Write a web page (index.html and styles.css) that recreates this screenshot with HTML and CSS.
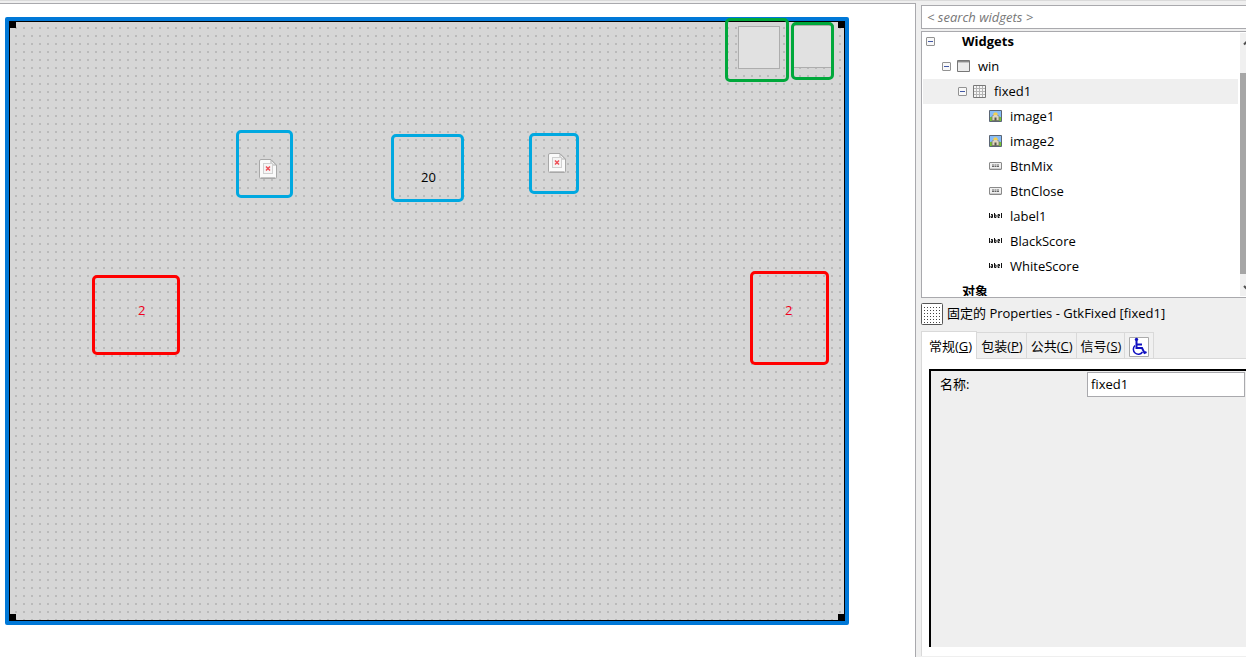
FILE: index.html
```html
<!DOCTYPE html>
<html lang="zh-CN">
<head>
<meta charset="utf-8">
<title>Glade</title>
<link rel="stylesheet" href="styles.css">
</head>
<body>
<svg class="defs" width="0" height="0" aria-hidden="true">
  <symbol id="missing" viewBox="0 0 18 20">
    <path d="M2 .5h10l5.500 5.500v12.500a1 1 0 0 1-1 1h-15a1 1 0 0 1-1-1v-16.500a1.500 1.500 0 0 1 1.500-1.500z" fill="#fafafa" stroke="#a8a8a8"/>
    <path d="M1.500 18.500h15" stroke="#c4c4c4"/>
    <path d="M12 1v5h5z" fill="#f0f0f0" stroke="#b0b0b0"/>
    <rect x="4.500" y="4.500" width="9" height="10" fill="#f5f5f5" stroke="#d0d0d0"/>
    <path d="M7 7.500l4 4m0-4l-4 4" stroke="#ee4d55" stroke-width="1.500"/>
  </symbol>
  <symbol id="image" viewBox="0 0 13 12">
    <path d="M.5.500h12v11h-12z" fill="#86bcf8" stroke="#5c6674"/>
    <path d="M1 7h11v4h-11z" fill="#76c433"/>
    <path d="M3 6.500l3.500-3.500 3.500 3.500v4h-7z" fill="#ddd5bd" stroke="#77736a" stroke-width=".8"/>
    <path d="M4 5l1-2.500h3l1 2.500z" fill="#f3cf52"/>
    <path d="M5.500 7.500h2v3h-2z" fill="#55534e"/>
  </symbol>
  <symbol id="button" viewBox="0 0 13 8">
    <rect x=".5" y=".5" width="12" height="7" rx=".5" fill="#f0f0f0" stroke="#8a8a8a"/>
    <path d="M1 6.500h11" stroke="#ccc"/>
    <path d="M3 3h7M3 4.500h7" stroke="#666" stroke-dasharray="2 .5"/>
  </symbol>
  <symbol id="label" viewBox="0 0 13 5">
    <path d="M.5 0v5M2 1.500h1.500v3h-1.500v-1.500h1.500M5.500 0v4.500h1.500v-2.500h-1.500M10.500 4.500h-1.500v-3h1.500v1.500h-1.500M12.500 0v5" fill="none" stroke="#111"/>
  </symbol>
</svg>

<div class="app">
  <main class="workspace">
    <div class="window">
      <div class="surface">
        <i class="handle handle-tl"></i><i class="handle handle-tr"></i>
        <i class="handle handle-bl"></i><i class="handle handle-br"></i>
        <button class="placed mix" aria-label="BtnMix"></button>
        <button class="placed close" aria-label="BtnClose"></button>
        <svg class="missing missing-1"><use href="#missing"/></svg>
        <svg class="missing missing-2"><use href="#missing"/></svg>
        <span class="text text-round">20</span>
        <span class="text text-black">2</span>
        <span class="text text-white">2</span>
        <div class="mark green mark-mix"></div>
        <div class="mark green mark-close"></div>
        <div class="mark cyan mark-image1"></div>
        <div class="mark cyan mark-round"></div>
        <div class="mark cyan mark-image2"></div>
        <div class="mark red mark-black"></div>
        <div class="mark red mark-white"></div>
      </div>
    </div>
  </main>

  <aside class="inspector">
    <input class="search" type="text" placeholder="&lt; search widgets &gt;" aria-label="search widgets">

    <div class="tree-box">
      <ul class="tree">
        <li class="row level-0"><button class="expander" aria-label="collapse Widgets"></button><b>Widgets</b></li>
        <li class="row level-1"><button class="expander" aria-label="collapse win"></button>
          <svg class="icon icon-window" viewBox="0 0 13 12"><path d="M.5.500h12v11h-12z" fill="#ececec" stroke="#777"/><path d="M1 1.500h11" stroke="#8c8c8c"/><path d="M1 2.500h11" stroke="#c4c4c4"/></svg><span>win</span></li>
        <li class="row level-2 selected"><button class="expander" aria-label="collapse fixed1"></button>
          <svg class="icon icon-fixed" viewBox="0 0 13 13"><path d="M.5.500h12v12h-12z" fill="#f6f6f6" stroke="#777"/><path d="M3.500 1v11M6.500 1v11M9.500 1v11M1 3.500h11M1 6.500h11M1 9.500h11" stroke="#b4b4b4"/></svg><span>fixed1</span></li>
        <li class="row level-3"><svg class="icon icon-image"><use href="#image"/></svg><span>image1</span></li>
        <li class="row level-3"><svg class="icon icon-image"><use href="#image"/></svg><span>image2</span></li>
        <li class="row level-3"><svg class="icon icon-button"><use href="#button"/></svg><span>BtnMix</span></li>
        <li class="row level-3"><svg class="icon icon-button"><use href="#button"/></svg><span>BtnClose</span></li>
        <li class="row level-3"><svg class="icon icon-label"><use href="#label"/></svg><span>label1</span></li>
        <li class="row level-3"><svg class="icon icon-label"><use href="#label"/></svg><span>BlackScore</span></li>
        <li class="row level-3"><svg class="icon icon-label"><use href="#label"/></svg><span>WhiteScore</span></li>
        <li class="row level-0 last"><b>对象</b></li>
      </ul>
      <div class="scrollbar">
        <svg class="arrow" viewBox="0 0 6 40"><path d="M4 11.500l4-4" stroke="#505050" stroke-width="2"/></svg>
        <div class="thumb"></div>
        <svg class="arrow-down" viewBox="0 0 6 22"><path d="M4 12l4 4" stroke="#505050" stroke-width="2"/></svg>
      </div>
    </div>

    <h1 class="heading">
      <svg class="fixed-icon" viewBox="0 0 22 22"><rect x=".5" y=".5" width="21" height="21" rx="1" fill="#fff" stroke="#555"/><path d="M3 4.500h17M3 7.500h17M3 10.500h17M3 13.500h17M3 16.500h17M3 19.500h17" stroke="#444" stroke-dasharray="1 2"/></svg>
      <span>固定的 Properties - GtkFixed [fixed1]</span>
    </h1>

    <div class="tabs" role="tablist">
      <button class="tab active" role="tab" aria-selected="true">常规(<u>G</u>)</button>
      <button class="tab" role="tab">包装(<u>P</u>)</button>
      <button class="tab" role="tab">公共(<u>C</u>)</button>
      <button class="tab" role="tab">信号(<u>S</u>)</button>
      <button class="tab tab-icon" role="tab" aria-label="Accessibility">
        <svg class="access" viewBox="0 0 20 20"><path d="M.5.500h19v19h-19z" fill="#fff" stroke="#aaa"/><circle cx="7.500" cy="2.500" r="1.700" fill="#1010c0"/><path d="M7.500 4v7h5.500l2.500 5 2-1M8 7.500h5" fill="none" stroke="#1010c0" stroke-width="2"/><path d="M6 8.500a5 5 0 1 0 7.500 6.500" fill="none" stroke="#1010c0" stroke-width="1.500"/></svg>
      </button>
    </div>

    <div class="page">
      <div class="form">
        <label class="name" for="widget-name">名称:</label>
        <input class="value" id="widget-name" type="text" value="fixed1">
      </div>
    </div>
  </aside>
</div>
</body>
</html>
```

FILE: styles.css
```css
* { box-sizing: border-box; }

body {
  margin: 0;
  background: #efefef;
  color: #000;
  font: 13px/20px "Open Sans", "Noto Sans CJK SC", sans-serif;
  overflow: hidden;
}

button, input { font: inherit; color: inherit; margin: 0; }

.defs { position: absolute; }

.app {
  display: grid;
  grid-template-columns: minmax(0, 1fr) 330px;
  height: 100vh;
  border-top: 1px solid #dadada;
  padding-top: 2px;
}

/* Design area */
.workspace {
  background: #fff;
  border-top: 1px solid #a9a9ad;
  border-right: 1px solid #a9a9ad;
  padding: 13px 5px;
  overflow: hidden;
}

.window {
  width: 844px;
  height: 608px;
  border: 4px solid #0078d7;
  border-radius: 2px;
}

.surface {
  position: relative;
  height: 100%;
  border: 1px solid #000;
  background: #d6d6d6 url("data:image/svg+xml,%3Csvg xmlns='http://www.w3.org/2000/svg' width='8' height='8'%3E%3Crect x='5' y='5' width='2' height='2' fill='%23bababa'/%3E%3C/svg%3E");
}

.handle { position: absolute; width: 7px; height: 7px; background: #000; }
.handle-tl { left: -1px; top: -1px; }
.handle-tr { right: -1px; top: -1px; }
.handle-bl { left: -1px; bottom: -1px; }
.handle-br { right: -1px; bottom: -1px; }

.placed { position: absolute; width: 42px; height: 43px; padding: 0; background: #e1e1e1; border: 1px solid #adadad; }
.mix { left: 728px; top: 4px; }
.close { left: 782px; top: 3px; }

.missing { position: absolute; width: 18px; height: 20px; }
.missing-1 { left: 249px; top: 137px; }
.missing-2 { left: 538px; top: 131px; }

.text { position: absolute; line-height: 20px; }
.text-round { left: 411px; top: 145px; }
.text-black { left: 128px; top: 278px; color: #f00020; }
.text-white { left: 775px; top: 278px; color: #f00020; }

.mark { position: absolute; border: 3px solid; border-radius: 5px; }
.green { border-color: #00a83b; }
.cyan { border-color: #00a8e0; }
.red { border-color: #f00; }
.mark-mix { left: 715px; top: -4px; width: 64px; height: 64px; }
.mark-close { left: 781px; top: 0; width: 43px; height: 58px; }
.mark-image1 { left: 226px; top: 108px; width: 57px; height: 68px; }
.mark-round { left: 381px; top: 112px; width: 73px; height: 68px; }
.mark-image2 { left: 519px; top: 111px; width: 50px; height: 61px; }
.mark-black { left: 82px; top: 253px; width: 88px; height: 80px; }
.mark-white { left: 740px; top: 249px; width: 79px; height: 94px; }

/* Inspector */
.inspector {
  display: flex;
  flex-direction: column;
  padding: 2px 0 0 5px;
  min-width: 0;
}

.search {
  height: 24px;
  width: 100%;
  padding: 0 5px;
  background: #fff;
  border: 1px solid #a9a9ad;
  border-right: 0;
  outline: 0;
}
.search::placeholder { color: #777; font-style: italic; opacity: 1; }

.tree-box {
  display: flex;
  justify-content: space-between;
  height: 267px;
  margin-top: 2px;
  padding: 1px 0 1px 1px;
  background: #fff;
  border: 1px solid #a9a9ad;
  border-right: 0;
}

.tree {
  flex: 1;
  display: flex;
  flex-direction: column;
  justify-content: flex-end;
  height: 263px;
  margin: 0 2px 0 0;
  padding: 0;
  list-style: none;
  overflow: hidden;
}

.row { display: flex; flex: none; align-items: center; height: 25px; }
.row span, .row b { padding-bottom: 2px; }
.row.last { height: 17px; align-items: flex-start; line-height: 25px; overflow: hidden; }
.selected { background: #efefef; }
.level-0 { padding-left: 3px; }
.level-0 b { margin-left: 27px; }
.level-0.last b { margin-left: 36px; }
.level-1 { padding-left: 19px; }
.level-2 { padding-left: 35px; }
.level-3 { padding-left: 66px; }

.expander {
  width: 9px;
  height: 9px;
  padding: 0;
  border: 1px solid #929292;
  border-radius: 1px;
  background: linear-gradient(#4459a5, #4459a5) center / 5px 1px no-repeat #f8f8f8;
}
.expander + .icon { margin-left: 6px; }

.icon { width: 13px; height: 13px; margin-right: 8px; }
.icon-window, .icon-image { height: 12px; margin-bottom: 1px; }
.icon-button { height: 8px; margin-bottom: 1px; }
.icon-label { height: 5px; margin-bottom: 2px; }

.scrollbar { display: flex; flex-direction: column; width: 6px; background: #f0f0f0; overflow: hidden; }
.arrow { height: 40px; }
.arrow-down { height: 22px; }
.thumb { flex: 1; background: #a6a6a6; }

.heading {
  display: flex;
  align-items: center;
  gap: 4px;
  margin: 5px 0 6px;
  font-size: 13px;
  font-weight: 400;
  line-height: 20px;
}
.heading span { padding-bottom: 2px; }
.fixed-icon { width: 22px; height: 22px; }

.tabs {
  display: flex;
  align-items: flex-end;
  height: 28px;
  background: linear-gradient(#d9d9d9, #d9d9d9) bottom / 100% 1px no-repeat;
}

.tab {
  height: 27px;
  padding: 1px 3px 0 4px;
  background: #f0f0f0;
  border: 1px solid #d9d9d9;
  border-left-width: 0;
  white-space: nowrap;
}
.tab.active { height: 28px; padding: 0 4px 0 7px; background: #fff; border-left-width: 1px; border-bottom: 0; }
.tab-icon { padding: 3px 4px 0; }
.access { display: block; width: 20px; height: 20px; }

.page {
  flex: 1;
  margin-bottom: 1px;
  padding: 10px 0 9px 7px;
  background: #fff;
  border-left: 1px solid #d9d9d9;
}

.form {
  display: grid;
  grid-template-columns: 1fr 158px;
  align-items: start;
  height: 100%;
  padding: 1px 1px 0 9px;
  background: #efefef;
  border-top: 2px solid #000;
  border-left: 2px solid #000;
}
.name { line-height: 25px; }
.value { height: 25px; width: 100%; padding: 0 3px 1px; background: #fff; border: 1px solid #a9a9ad; outline: 0; }
```
